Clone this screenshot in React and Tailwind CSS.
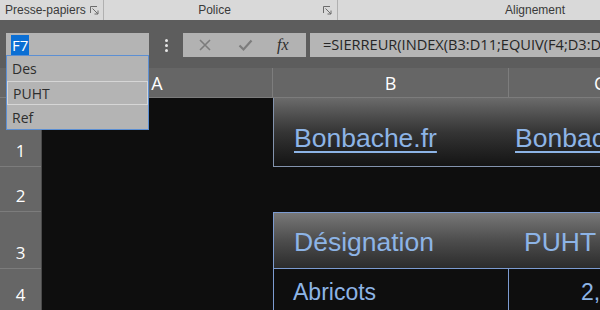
import React from "react";

const ui = { fontFamily: '"Open Sans", "Noto Sans", sans-serif' };
const cell = { fontFamily: '"Liberation Sans", Arial, sans-serif' };

function Launcher() {
  return (
    <svg width="9" height="9" viewBox="0 0 9 9" fill="none" stroke="#6b6b6b" strokeWidth="1">
      <path d="M0.5 7 V0.5 H7" />
      <path d="M2.5 2.5 L8 8" />
      <path d="M8 4.5 V8 H4.5" />
    </svg>
  );
}

function RowHead({ n, h }) {
  return (
    <div
      className={`flex items-end justify-center pb-[3px] text-[17px] text-white bg-[#666666] border-b border-[#7c7c7c] ${h}`}
      style={ui}
    >
      {n}
    </div>
  );
}

export default function App() {
  return (
    <div className="relative w-[600px] h-[310px] overflow-hidden bg-[#5d5d5d]">
      {/* ribbon group labels */}
      <div
        className="flex h-[20px] bg-[#d9d9d9] text-[12px] text-[#3a3a3a]"
        style={{ fontFamily: '"Liberation Sans", Arial, sans-serif' }}
      >
        <div className="flex items-center w-[104px] pl-[5px] pr-[4px] border-r border-[#b0b0b0]">
          <span className="flex-1 leading-none">Presse-papiers</span>
          <Launcher />
        </div>
        <div className="flex items-center w-[234px] pr-[5px] border-r border-[#b0b0b0]">
          <span className="flex-1 text-center pl-[2px] leading-none">Police</span>
          <Launcher />
        </div>
        <div className="flex items-center pl-[167px]">
          <span className="leading-none">Alignement</span>
        </div>
      </div>

      {/* formula bar */}
      <div className="flex items-stretch h-[24px] mt-[13px] pl-[6px]">
        <div className="w-[143px] bg-[#b4b4b4] flex items-center pl-[5px] text-[15px]" style={ui}>
          <span className="bg-[#0b6fd4] text-white px-[1px] leading-[20px]">F7</span>
        </div>
        <div className="w-[34px] flex flex-col items-center justify-center gap-[2px]">
          <span className="w-[3px] h-[3px] bg-[#e6e6e6] rounded-full" />
          <span className="w-[3px] h-[3px] bg-[#e6e6e6] rounded-full" />
          <span className="w-[3px] h-[3px] bg-[#e6e6e6] rounded-full" />
        </div>
        <div className="w-[123px] bg-[#b2b2b2] flex items-center">
          <svg className="ml-[15px]" width="14" height="14" viewBox="0 0 14 14" stroke="#7c7c7c" strokeWidth="1.6">
            <path d="M2 2 L12 12 M12 2 L2 12" />
          </svg>
          <svg className="ml-[26px]" width="15" height="14" viewBox="0 0 15 14" fill="none" stroke="#7c7c7c" strokeWidth="2.2">
            <path d="M1.5 7.5 L5.5 11.5 L13.5 2.5" />
          </svg>
          <span
            className="ml-[24px] italic text-[16px] text-[#2e2e2e] leading-none"
            style={{ fontFamily: '"Liberation Serif", "Times New Roman", serif' }}
          >
            fx
          </span>
        </div>
        <div
          className="flex-1 min-w-0 ml-[4px] bg-[#b5b5b5] flex items-center pl-[13px] text-[14.6px] text-[#262626] whitespace-nowrap overflow-hidden"
          style={ui}
        >
          =SIERREUR(INDEX(B3:D11;EQUIV(F4;D3:D11;0);2);"")
        </div>
      </div>

      {/* sheet */}
      <div className="flex mt-[11px]">
        {/* row headers */}
        <div className="w-[42px] flex flex-col shrink-0 border-r border-[#4a4a4a]">
          <div className="h-[30px] bg-[#666666] border-b border-[#7c7c7c]" />
          <RowHead n="1" h="h-[69px]" />
          <RowHead n="2" h="h-[45px]" />
          <RowHead n="3" h="h-[57px]" />
          <RowHead n="4" h="h-[42px]" />
        </div>

        <div className="flex-1 min-w-0 overflow-hidden flex flex-col">
          {/* column headers */}
          <div className="flex h-[30px] bg-[#666666] text-white text-[18px] border-b border-[#7c7c7c]" style={ui}>
            <div className="w-[231px] shrink-0 flex items-center justify-center pt-[2px] border-r border-[#7d7d7d]">A</div>
            <div className="w-[236px] shrink-0 flex items-center justify-center pt-[2px] border-r border-[#7d7d7d]">B</div>
            <div className="flex-1 flex items-center pl-[85px] pt-[2px]">C</div>
          </div>

          {/* row 1 */}
          <div className="flex h-[69px] bg-[#0e0e0e]">
            <div className="w-[231px] shrink-0" />
            <div
              className="flex-1 min-w-0 overflow-hidden flex items-end pb-[15px] bg-gradient-to-b from-[#6b6b6b] via-[#353535] to-[#141414] border-l border-b border-[#8393ad] text-[26.5px] text-[#8db4e6]"
              style={cell}
            >
              <span className="w-[236px] shrink-0 pl-[20px] underline underline-offset-[4px] decoration-[2px] leading-none">Bonbache.fr</span>
              <span className="pl-[5px] underline underline-offset-[4px] decoration-[2px] leading-none whitespace-nowrap">Bonbache.fr</span>
            </div>
          </div>

          {/* row 2 */}
          <div className="h-[45px] bg-[#0e0e0e]" />

          {/* row 3 */}
          <div className="flex h-[57px] bg-[#0e0e0e]">
            <div className="w-[231px] shrink-0" />
            <div
              className="flex-1 min-w-0 overflow-hidden flex items-end pb-[13px] bg-gradient-to-b from-[#787878] via-[#4d4d4d] to-[#2c2c2c] border-l border-t border-b border-[#7c9bd0] text-[26.5px] text-[#8db4e6]"
              style={cell}
            >
              <span className="w-[235px] shrink-0 pl-[20px] leading-none">Désignation</span>
              <span className="pl-[15px] leading-none whitespace-nowrap">PUHT / Kg</span>
            </div>
          </div>

          {/* row 4 */}
          <div className="flex h-[60px] bg-[#0e0e0e] text-[23px] text-[#8db4e6]" style={cell}>
            <div className="w-[231px] shrink-0" />
            <div className="w-[236px] shrink-0 border-l border-r border-[#7c9bd0] pl-[19px] pt-[12px] leading-none">Abricots</div>
            <div className="flex-1 min-w-0 pt-[12px] pl-[72px] leading-none whitespace-nowrap">2,50 €</div>
          </div>
        </div>
      </div>

      {/* name box dropdown */}
      <div
        className="absolute left-[6px] top-[55px] w-[143px] bg-[#b4b4b4] border border-[#5c8fd3] flex flex-col text-[14px] text-[#2e2e2e]"
        style={ui}
      >
        <div className="h-[25px] flex items-center pl-[5px]">Des</div>
        <div className="h-[24px] flex items-center pl-[5px] border border-[#d6d6d6]">PUHT</div>
        <div className="h-[24px] flex items-center pl-[5px]">Ref</div>
      </div>
    </div>
  );
}
